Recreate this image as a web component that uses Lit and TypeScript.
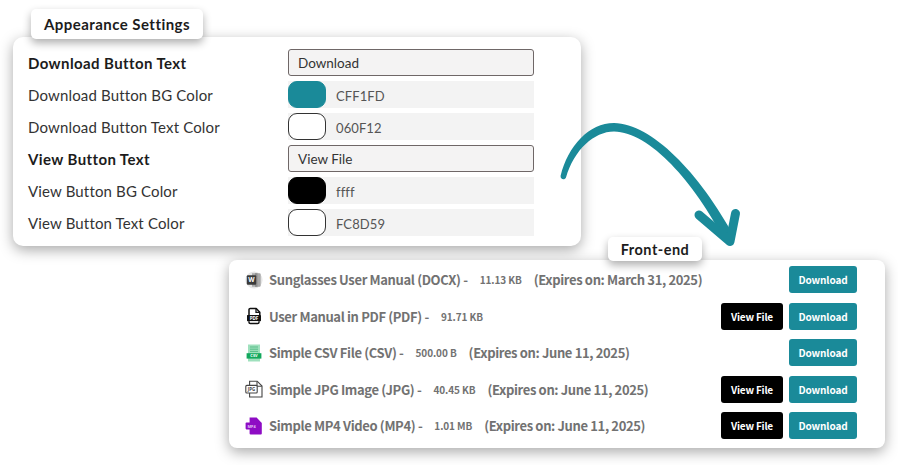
import { LitElement, html, css, svg } from "lit";
import { customElement } from "lit/decorators.js";

const TEAL = "#1a8a99";
const settings = [
  { label: "Download Button Text", bold: true, kind: "text", value: "Download" },
  { label: "Download Button BG Color", kind: "color", swatch: TEAL, edge: TEAL, value: "CFF1FD" },
  { label: "Download Button Text Color", kind: "color", swatch: "#fff", edge: "#333", value: "060F12" },
  { label: "View Button Text", bold: true, kind: "text", value: "View File" },
  { label: "View Button BG Color", kind: "color", swatch: "#000", edge: "#000", value: "ffff" },
  { label: "View Button Text Color", kind: "color", swatch: "#fff", edge: "#333", value: "FC8D59" },
];

const icons: Record<string, unknown> = {
  word: svg`<svg class="ico" viewBox="0 0 18 18">
    <circle cx="9" cy="9" r="8.6" fill="#e6e6e6"/>
    <path d="M7 2.2h7.5a1.2 1.2 0 0 1 1.2 1.2v11.2a1.2 1.2 0 0 1-1.2 1.2H7z" fill="#a9a9a9"/>
    <path d="M10 2.2h2.5v13.6H10z" fill="#8e8e8e"/>
    <rect x="1.8" y="4.2" width="9.4" height="9.6" rx="1" fill="#3a3a3a"/>
    <text x="6.5" y="11.3" class="t" font-size="6.5" fill="#fff" text-anchor="middle">W</text></svg>`,
  pdf: svg`<svg class="ico" viewBox="0 0 18 18">
    <path d="M4 8V2.6A1.2 1.2 0 0 1 5.2 1.4h6l3.6 3.8V8" fill="#fff" stroke="#111" stroke-width="1.5" stroke-linejoin="round"/>
    <path d="M11 1.6v3.8h3.8" fill="none" stroke="#111" stroke-width="1.3"/>
    <path d="M2.6 8h12.8a.6.6 0 0 1 .6.6v5a.6.6 0 0 1-.6.6H2.6a.6.6 0 0 1-.6-.6v-5a.6.6 0 0 1 .6-.6z" fill="#111"/>
    <path d="M4 14.2v1A1.4 1.4 0 0 0 5.4 16.6h7.2a1.4 1.4 0 0 0 1.4-1.4v-1" fill="#fff" stroke="#111" stroke-width="1.5"/>
    <text x="9" y="12.8" class="t" font-size="4.6" fill="#fff" text-anchor="middle">PDF</text></svg>`,
  csv: svg`<svg class="ico" viewBox="0 0 18 18">
    <path d="M3 .5h12v17H3z" fill="#9fe0bd"/>
    <path d="M5 3h8M5 5.2h8M5 7.4h8" stroke="#56bd87" stroke-width="1"/>
    <rect x="1.6" y="9.2" width="14.8" height="5.4" fill="#12a85c"/>
    <text x="9" y="13.3" class="t" font-size="4" fill="#fff" text-anchor="middle">CSV</text></svg>`,
  jpg: svg`<svg class="ico" viewBox="0 0 18 18">
    <path d="M4.6 5V1.2h7.6L17 6v11H4.6V13" fill="#fff" stroke="#444" stroke-width="1.1"/>
    <path d="M12 1.4v4.8h4.8" fill="none" stroke="#444" stroke-width="1.1"/>
    <rect x=".8" y="5.4" width="11.4" height="7.6" rx="1" fill="#fff" stroke="#444" stroke-width="1.1"/>
    <text x="6.5" y="10.9" class="t" font-size="4.4" fill="#444" text-anchor="middle">JPG</text></svg>`,
  mp4: svg`<svg class="ico" viewBox="0 0 18 18">
    <path d="M4.6 .6h7L16.8 6v10.4a1 1 0 0 1-1 1H5.6a1 1 0 0 1-1-1z" fill="#8e0cc4"/>
    <rect x=".6" y="5.6" width="12" height="6.8" rx=".8" fill="#8e0cc4"/>
    <text x="6.6" y="10.5" class="t" font-size="3.8" fill="#e6c4f5" text-anchor="middle">MP4</text></svg>`,
};

const files = [
  { icon: "word", name: "Sunglasses User Manual (DOCX) -", size: "11.13 KB", exp: "(Expires on: March 31, 2025)", view: false },
  { icon: "pdf", name: "User Manual in PDF (PDF) -", size: "91.71 KB", exp: "", view: true },
  { icon: "csv", name: "Simple CSV File (CSV) -", size: "500.00 B", exp: "(Expires on: June 11, 2025)", view: false },
  { icon: "jpg", name: "Simple JPG Image (JPG) -", size: "40.45 KB", exp: "(Expires on: June 11, 2025)", view: true },
  { icon: "mp4", name: "Simple MP4 Video (MP4) -", size: "1.01 MB", exp: "(Expires on: June 11, 2025)", view: true },
];

@customElement("app-root")
export class AppRoot extends LitElement {
  static styles = css`
    :host { display: block; width: 898px; height: 465px; background: #fff; overflow: hidden; }
    .page { position: relative; width: 898px; height: 465px; padding: 37px 0 0 13px; box-sizing: border-box; }
    .tag {
      position: absolute; background: #fff; border-radius: 5px; color: #1c1c1c; font-weight: 700;
      font-family: "Lato", sans-serif; display: flex; align-items: center; justify-content: center;
      box-shadow: 0 4px 9px rgba(0,0,0,.32);
    }
    .tag-a { left: 31px; top: 9px; width: 172px; height: 30px; font-size: 15px; letter-spacing: .45px; }
    .tag-b { left: 608px; top: 237px; width: 94px; height: 24px; font-size: 14.5px; letter-spacing: .5px; }
    .settings {
      width: 568px; height: 209px; box-sizing: border-box; background: #fff; border-radius: 10px;
      box-shadow: 0 4px 14px rgba(0,0,0,.34); padding: 12px 47px 0 15px;
      display: grid; grid-template-columns: 260px 246px; grid-auto-rows: 27px; row-gap: 5px;
      font-family: "Lato", sans-serif; color: #2a2a2a;
    }
    .lbl { font-size: 15px; letter-spacing: .15px; align-self: center; color: #333; padding-top: 1px; }
    .lbl.b { font-weight: 700; color: #1c1c1c; letter-spacing: .4px; padding-top: 0; }
    .input {
      background: #f4f3f3; border: 1px solid #6f6767; border-radius: 3px; box-sizing: border-box;
      display: flex; align-items: center; padding-left: 9px; font-size: 13.5px; color: #333;
    }
    .color { background: #f3f3f3; display: flex; align-items: center; font-size: 13px; letter-spacing: .1px; color: #555; }
    .val { padding-top: 2px; }
    .sw { width: 38px; height: 27px; border-radius: 9px; box-sizing: border-box; margin-right: 10px; border: 1px solid; }
    .frontend {
      margin: 14px 0 0 216px; width: 656px; height: 188px; box-sizing: border-box; background: #fff; border-radius: 8px;
      box-shadow: 0 4px 14px rgba(0,0,0,.34); padding: 6px 28px 0 16px;
      display: flex; flex-direction: column; gap: 9.5px;
      font-family: "Noto Sans CJK SC", "Noto Sans", sans-serif; color: #727272;
    }
    .row { height: 27px; display: flex; align-items: center; }
    .ico { width: 18px; height: 18px; margin-right: 6px; flex: none; }
    .t { font-family: "Noto Sans", sans-serif; font-weight: 700; }
    .name, .exp { font-size: 13px; font-weight: 700; letter-spacing: -.36px; }
    .size { font-size: 10px; font-weight: 700; margin: 0 12px; letter-spacing: -.1px; }
    .btns { margin-left: auto; display: flex; gap: 6px; }
    .btn { height: 27px; border-radius: 3px; color: #fff; font-size: 10px; font-weight: 700; display: flex; align-items: center; justify-content: center; }
    .view { width: 62px; background: #000; letter-spacing: -.2px; }
    .dl { width: 68px; background: #1a8a99; letter-spacing: -.1px; }
    .arrow { position: absolute; left: 550px; top: 115px; width: 200px; height: 140px; pointer-events: none; }
  `;

  render() {
    return html`<div class="page">
      <div class="settings">
        ${settings.map((s) => html`
          <div class="lbl ${s.bold ? "b" : ""}">${s.label}</div>
          ${s.kind === "text"
            ? html`<div class="input">${s.value}</div>`
            : html`<div class="color"><span class="sw" style="background:${s.swatch};border-color:${s.edge}"></span><span class="val">${s.value}</span></div>`}
        `)}
      </div>
      <div class="frontend">
        ${files.map((f) => html`<div class="row">
          ${icons[f.icon]}
          <span class="name">${f.name}</span><span class="size">${f.size}</span><span class="exp">${f.exp}</span>
          <div class="btns">
            ${f.view ? html`<div class="btn view">View File</div>` : ""}
            <div class="btn dl">Download</div>
          </div>
        </div>`)}
      </div>
      <div class="tag tag-a">Appearance Settings</div>
      <div class="tag tag-b">Front-end</div>
      <svg class="arrow" viewBox="550 115 200 140">
        <path d="M560.6 175.8C568 146 589 123 614 123C652 124 699 172 735 238L725 241C694 182 650 132 614 131.5C594 131.5 574 150 566 177.5C564.8 180.5 560 179.5 560.6 175.8Z" fill="${TEAL}"/>
        <path d="M699 215L730 241.5L735.5 213.5" fill="none" stroke="${TEAL}" stroke-width="9" stroke-linecap="round" stroke-linejoin="round"/>
      </svg>
    </div>`;
  }
}
